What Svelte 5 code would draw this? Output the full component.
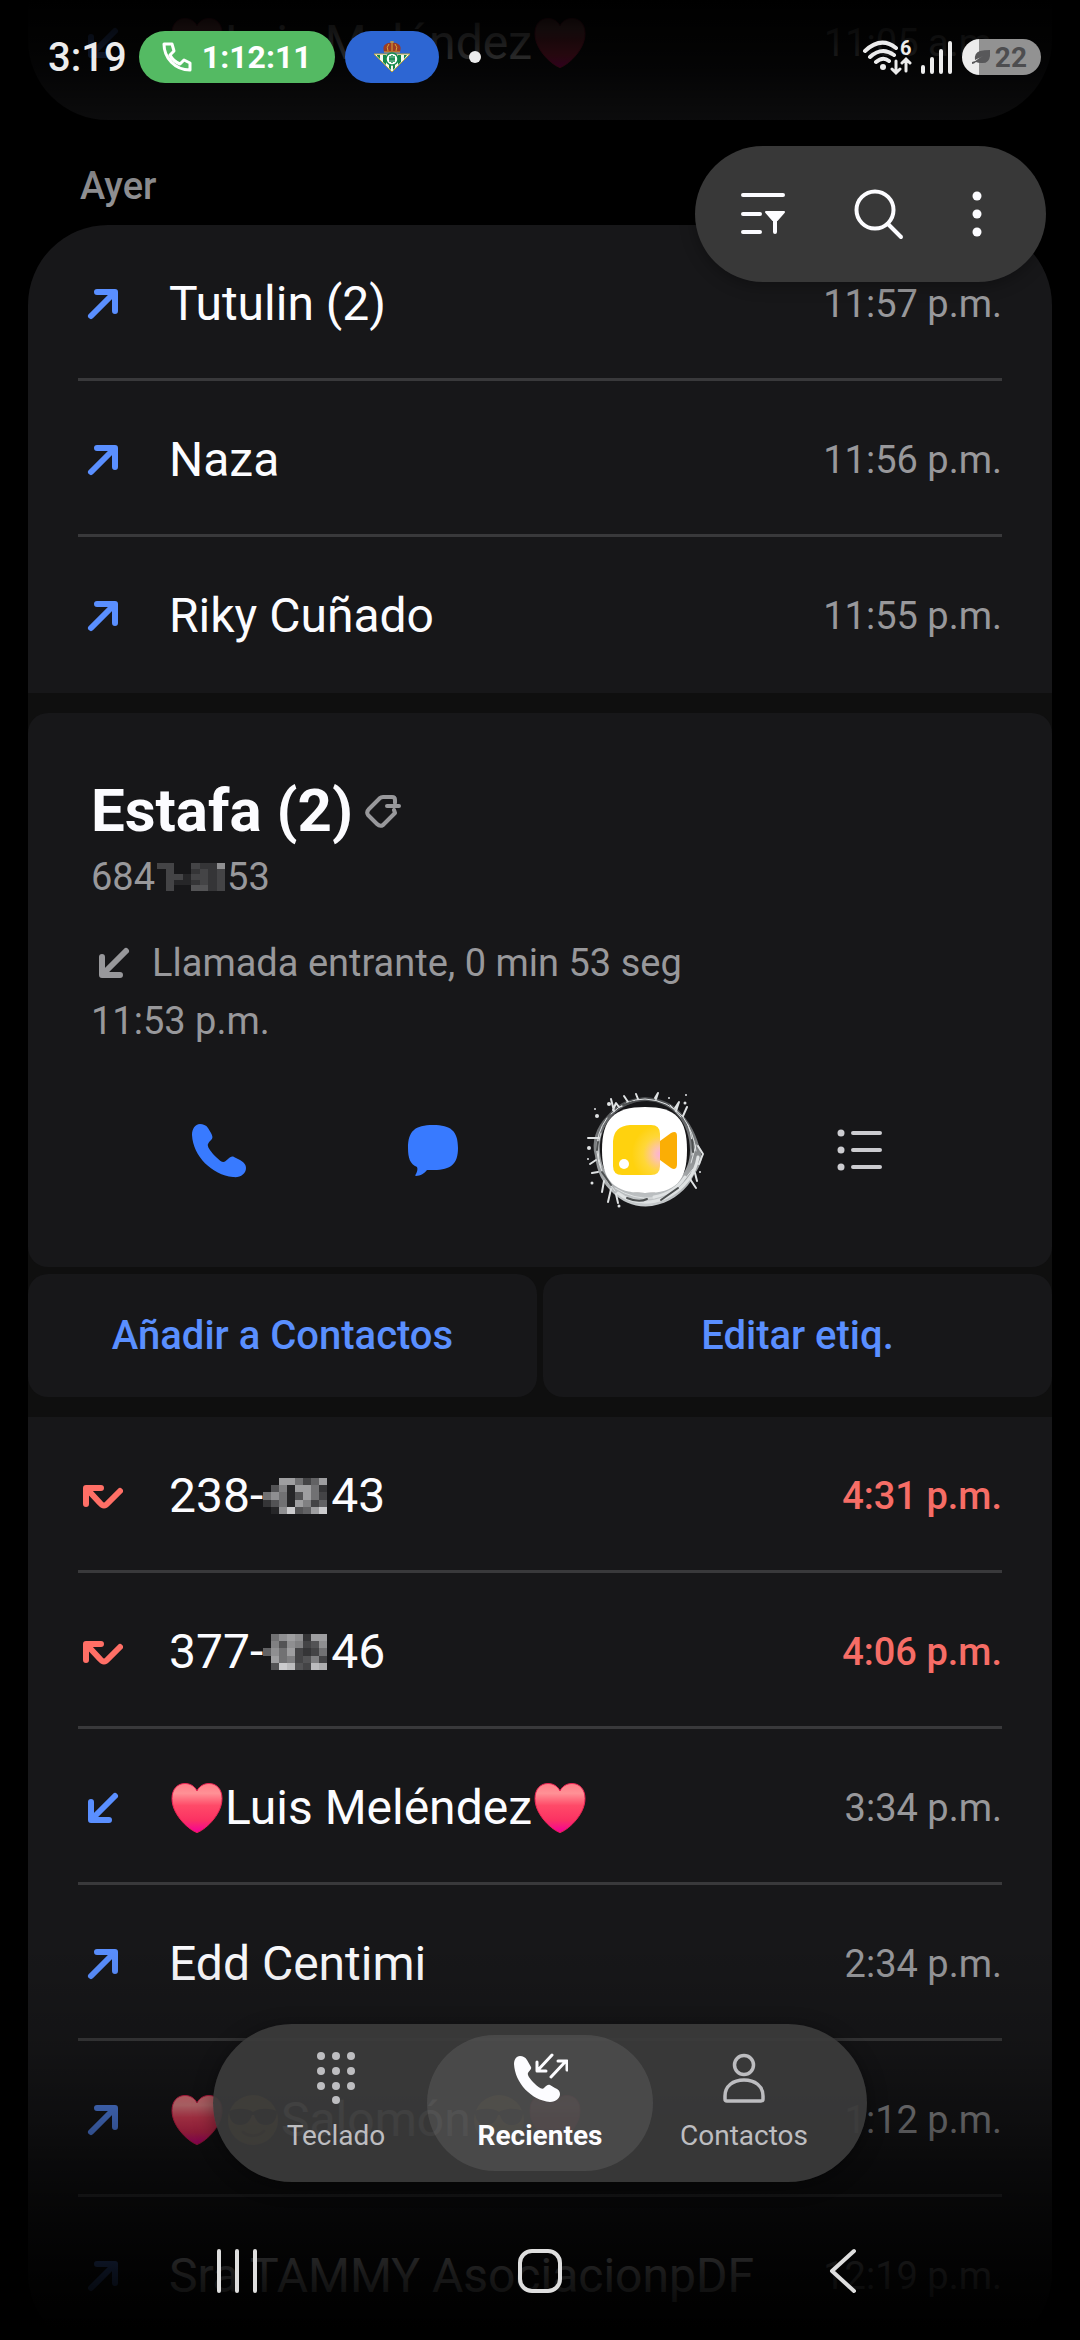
<script lang="ts">
  type CallKind = "out" | "in" | "missed";

  interface Call {
    id: number;
    kind: CallKind;
    // plain text, or one of the inline pictures: heart, cool, maskA, maskB
    name: string[];
    time: string;
  }

  const today: Call[] = [
    { id: 1, kind: "in", name: ["heart", "Luis Meléndez", "heart"], time: "11:05 a.m." },
  ];

  const before: Call[] = [
    { id: 2, kind: "out", name: ["Tutulin (2)"], time: "11:57 p.m." },
    { id: 3, kind: "out", name: ["Naza"], time: "11:56 p.m." },
    { id: 4, kind: "out", name: ["Riky Cuñado"], time: "11:55 p.m." },
  ];

  const after: Call[] = [
    { id: 5, kind: "missed", name: ["238-", "maskA", "43"], time: "4:31 p.m." },
    { id: 6, kind: "missed", name: ["377-", "maskB", "46"], time: "4:06 p.m." },
    { id: 7, kind: "in", name: ["heart", "Luis Meléndez", "heart"], time: "3:34 p.m." },
    { id: 8, kind: "out", name: ["Edd Centimi"], time: "2:34 p.m." },
    { id: 9, kind: "out", name: ["heart", "cool", "Salomón", "cool", "heart"], time: "1:12 p.m." },
    { id: 10, kind: "out", name: ["Sra TAMMY AsociacionpDF"], time: "12:19 p.m." },
  ];

  // one hex digit per tile, 0 is see-through
  const masks: Record<string, string[]> = {
    maskA: ["00996359", "04719962", "68614963", "24619735", "018c459c"],
    maskB: ["06898299", "07487348", "58693236", "09673473", "04cb43ba"],
    maskC: ["33003228", "03002323", "03313323", "03112323", "03004423"],
  };

  const tabs = [
    { id: "keypad", label: "Teclado" },
    { id: "recents", label: "Recientes" },
    { id: "contacts", label: "Contactos" },
  ];

  let tab = $state("recents");

  function tile(c: string): string {
    const v = 23 + parseInt(c, 16) * 15;
    return `rgb(${v},${v},${v + 2})`;
  }
</script>

{#snippet heart()}
  <svg class="emoji" viewBox="0 0 52 52" role="img" aria-label="corazón">
    <defs>
      <linearGradient id="heart-fill" x1="0" y1="0" x2="0" y2="1">
        <stop offset="0" stop-color="#ff7f88" />
        <stop offset="0.2" stop-color="#ff9196" />
        <stop offset="0.45" stop-color="#ff4a68" />
        <stop offset="0.75" stop-color="#fb3263" />
        <stop offset="1" stop-color="#f5009a" />
      </linearGradient>
    </defs>
    <path
      fill="url(#heart-fill)"
      stroke="#ef2455"
      stroke-width="1"
      d="M26 50.500C20 49 1 34 1 16.500C1 7 6.500 1.500 14 1.500C19.500 1.500 24 4.500 26 9C28 4.500 32.500 1.500 38 1.500C45.500 1.500 51 7 51 16.500C51 34 32 49 26 50.500Z"
    />
  </svg>
{/snippet}

{#snippet cool()}
  <svg class="emoji" viewBox="0 0 52 52" role="img" aria-label="gafas de sol">
    <circle cx="26" cy="26" r="25" fill="#c09a35" />
    <path fill="#15120c" d="M2 17C10 14 20 14 26 18C32 14 42 14 50 17C50 27 45 31 39 31C32 31 29 27 27 21H25C23 27 20 31 13 31C7 31 2 27 2 17Z" />
    <path d="M16 38C22 43 31 43 37 37" fill="none" stroke="#70450c" stroke-width="3" stroke-linecap="round" />
  </svg>
{/snippet}

{#snippet mask(id: string)}
  <svg class="mask" class:small={id === "maskC"} viewBox="0 0 64 40" preserveAspectRatio="none" aria-hidden="true" shape-rendering="crispEdges">
    {#each masks[id] as line, y}
      {#each line.split("") as c, x}
        {#if c !== "0"}
          <rect x={x * 8} y={y * 8} width="8" height="8" fill={tile(c)} />
        {/if}
      {/each}
    {/each}
  </svg>
{/snippet}

{#snippet arrow(kind: CallKind)}
  <svg class="arrow {kind}" viewBox="0 0 40 40" aria-hidden="true">
    {#if kind === "out"}
      <path d="M8 32L31 9M14 8H32V27" />
    {:else if kind === "in"}
      <path d="M32 8L9 31M8 14V32H26" />
    {:else}
      <path d="M3 28V12H18M4 13L17 27Q21 32 25 27L37 15" />
    {/if}
  </svg>
{/snippet}

{#snippet callList(calls: Call[])}
  <ul class="calls">
    {#each calls as call (call.id)}
      <li>
        <button type="button" class="call">
          {@render arrow(call.kind)}
          <span class="name">
            {#each call.name as part}
              {#if part === "heart"}
                {@render heart()}
              {:else if part === "cool"}
                {@render cool()}
              {:else if masks[part]}
                {@render mask(part)}
              {:else}
                <span>{part}</span>
              {/if}
            {/each}
          </span>
          <span class="time" class:missed={call.kind === "missed"}>{call.time}</span>
        </button>
      </li>
    {/each}
  </ul>
{/snippet}

<div class="phone">
  <main class="scroller">
    <section class="card today">
      {@render callList(today)}
    </section>

    <h2>Ayer</h2>

    <section class="card yesterday">
      {@render callList(before)}

      <div class="expanded">
        <article class="detail">
          <h3>
            Estafa (2)
            <svg class="tag" viewBox="0 0 36 36" aria-hidden="true">
              <path d="M29 17L30 20L18 32Q15 34 12 31L3 22Q1 19 4 16L15 5Q16 4 18 4H27Q30 4 30 7V10M22 13H34" />
            </svg>
          </h3>
          <p class="number"><span>684</span>{@render mask("maskC")}<span>53</span></p>
          <p class="info">{@render arrow("in")}<span>Llamada entrante, 0 min 53 seg</span></p>
          <p class="info">11:53 p.m.</p>

          <div class="quick">
            <button type="button" aria-label="Llamar">
              <svg width="56" height="56" viewBox="0 0 56 56">
                <path
                  fill="#387aff"
                  d="M9 2C4 2 1 7 1 13C2 34 21 53 42 55C49 56 55 52 55 46C55 42 52 40 49 38L43 35C41 34 39 35 37 37L34 39.500C32 41 29 39 25 35C21 31 17 26 17 24C16 22 19 19 21 17C22 15 21 13 20 11L17 6C15 3 12 2 9 2Z"
                />
              </svg>
            </button>
            <button type="button" aria-label="Mensaje">
              <svg width="54" height="56" viewBox="0 0 54 56">
                <path
                  fill="#387aff"
                  d="M27 3C45 3 52 9 52 26C52 42 45 48 28 48H21C19 51 14 54 10 54C9 54 9 53 10 52C11 50 12 47 11 45C4 42 2 36 2 26C2 9 9 3 27 3Z"
                />
              </svg>
            </button>
            <button type="button" aria-label="Videollamada">
              <svg width="120" height="120" viewBox="0 0 120 120">
                <defs>
                  <radialGradient id="cam" cx="1" cy="0.58" r="0.6">
                    <stop offset="0" stop-color="#fdb0d8" />
                    <stop offset="0.2" stop-color="#fdc2b0" />
                    <stop offset="0.6" stop-color="#ffd737" />
                    <stop offset="1" stop-color="#ffd20e" />
                  </radialGradient>
                  <linearGradient id="water" x1="0" y1="0" x2="0" y2="1">
                    <stop offset="0" stop-color="#4a4c4e" />
                    <stop offset="0.5" stop-color="#85888a" />
                    <stop offset="1" stop-color="#c9cdcf" />
                  </linearGradient>
                </defs>
                <path
                  fill="url(#water)"
                  d="M20 26C34 10 44 9 58 7C76 8 88 15 95 24C106 36 112 52 115 68C113 79 107 83 104 91C95 104 82 113 65 116C48 118 36 112 27 104C15 93 10 82 8 66C4 52 9 37 20 26ZM60 11C32 11 11 34 13 62C15 88 34 104 58 103C86 103 103 84 103 60C103 34 86 12 60 11Z"
                />
                <g fill="none" stroke="#dfe2e3" stroke-linecap="round" stroke-linejoin="round">
                  <path stroke-width="1" d="M24 24Q39 9 58 9Q81 10 96 27Q107 43 109 61M20 28Q9 43 10 62Q12 84 28 101M14 43Q8 60 14 77M101 35Q107 51 105 65M34 17L41 12M83 15L94 27" />
                  <path stroke-width="3" d="M31 103Q43 113 63 112Q86 109 101 90Q109 80 111 67M67 107Q88 103 98 87" />
                  <path stroke-width="1" d="M28 98Q47 110 67 108Q91 101 106 79M39 109Q58 117 78 109M109 55L104 73M112 68L104 85" />
                  <path stroke-width="2" d="M27 21L24 9M32 17L29 13L26 20M41 12L37 6M51 9L49 4M69 9L71 3L68 8M88 18L92 12L89 21M96 26L100 17M12 48L1 48M9 70L3 74M11 82L5 83M17 91L15 102M24 99L21 112M29 104L31 113M111 56L116 64L112 74M108 83L110 91M103 89L109 98" />
                </g>
                <path fill="none" stroke="#4c4f50" stroke-width="2" stroke-linecap="round" d="M40 108Q52 113 60 109M74 110L91 98M15 82L24 95M105 50L106 62M11 52L10 60M36 15L46 12" />
                <g fill="#dfe2e3">
                  <circle cx="22" cy="14" r="2" />
                  <circle cx="8" cy="19" r="1" />
                  <circle cx="10" cy="26" r="2" />
                  <circle cx="2" cy="58" r="2" />
                  <circle cx="1" cy="69" r="1" />
                  <circle cx="5" cy="93" r="1.500" />
                  <circle cx="32" cy="116" r="1.500" />
                  <circle cx="82" cy="8" r="1" />
                  <circle cx="99" cy="5" r="1" />
                  <circle cx="98" cy="13" r="1.500" />
                  <circle cx="113" cy="82" r="1" />
                </g>
                <path fill="#fff" d="M58 17C89 17 100 29 100 60C100 91 89 103 58 103C27 103 15 91 15 60C15 29 27 17 58 17Z" />
                <path fill="url(#cam)" d="M43 35H64Q73 35 73 44V76Q73 85 64 85H35Q26 85 26 76V51Q27 36 43 35Z" />
                <path fill="#fbae05" d="M73 51L84 43Q90 40 90 46V74Q90 81 84 78L73 70Z" />
                <circle cx="37" cy="74" r="5" fill="#fff" />
              </svg>
            </button>
            <button type="button" aria-label="Detalles">
              <svg width="48" height="48" viewBox="0 0 48 48">
                <g fill="#ccccd0">
                  <circle cx="4" cy="7" r="3.500" />
                  <circle cx="4" cy="24" r="3.500" />
                  <circle cx="4" cy="41" r="3.500" />
                </g>
                <path stroke="#ccccd0" stroke-width="4" stroke-linecap="round" d="M16 7H43M16 24H43M16 41H43" />
              </svg>
            </button>
          </div>
        </article>

        <div class="pair">
          <button type="button">Añadir a Contactos</button>
          <button type="button">Editar etiq.</button>
        </div>
      </div>

      {@render callList(after)}
    </section>
  </main>

  <div class="fade top"></div>
  <div class="fade bottom"></div>

  <header class="status">
    <span class="clock">3:19</span>
    <span class="chip ongoing">
      <svg width="30" height="30" viewBox="0 0 30 30" aria-hidden="true">
        <path
          fill="none"
          stroke="#fff"
          stroke-width="3"
          stroke-linejoin="round"
          d="M2 2H10L12 9L8 13C10 17 13 20 18 22L22 18L28 21V28C13 28 2 16 2 2Z"
        />
      </svg>
      1:12:11
    </span>
    <span class="chip team">
      <svg width="38" height="34" viewBox="0 0 38 34" aria-hidden="true">
        <path fill="#9d3c25" d="M11 12Q9 6 13 4Q16 2 19 3Q22 2 25 4Q29 6 27 12Z" />
        <path fill="none" stroke="#d9a536" stroke-width="1" d="M11 12H27M15 11Q13 7 16 4M23 11Q25 7 22 4M19 11V1M17 2H21" />
        <path fill="#f5f7ef" stroke="#b7a03e" d="M1 14H37L19 32Z" />
        <path fill="#148748" d="M4 15H7V19L4 16ZM10 15H13V25L10 22ZM25 15H28V22L25 25ZM31 15H34L31 19ZM16 25H18V30L16 28ZM20 25H22V28L20 30Z" />
        <circle cx="19" cy="19" r="6" fill="#fff" stroke="#168a4b" stroke-width="1.500" />
        <path stroke="#168a4b" stroke-width="1.500" fill="none" d="M17 16V22M19 15V23M21 16V22M16 19H22" />
      </svg>
    </span>
    <span class="dot"></span>
    <span class="spacer"></span>
    <svg class="wifi" width="50" height="38" viewBox="0 0 50 38" aria-hidden="true">
      <g fill="none" stroke="#ececec" stroke-width="4" stroke-linecap="round">
        <path d="M3 13Q19 -2 34 10M8 19Q20 8 32 17M14 24Q21 18 27 23" />
        <path stroke-width="3" d="M34 23V34M30 31L34 35L38 31M44 33V22M40 25L44 21L48 25" />
      </g>
      <circle cx="21" cy="29" r="3" fill="#ececec" />
      <text x="38" y="17" class="wifi-gen">6</text>
    </svg>
    <svg width="34" height="38" viewBox="0 0 34 38" aria-hidden="true">
      <path stroke="#ececec" stroke-width="4" stroke-linecap="round" d="M4 29V34M13 21V34M22 13V34M31 5V34" />
    </svg>
    <span class="battery">
      <svg width="20" height="16" viewBox="0 0 20 16" aria-hidden="true">
        <path fill="#58585a" d="M19 1V7Q18 15 10 14Q7 14 5 13Q3 15 1 15L1 13Q4 13 7 10L12 7L6 10L4 11Q3 4 9 2Q13 1 19 1Z" />
      </svg>
      22
    </span>
  </header>

  <div class="actions">
    <button type="button" aria-label="Filtrar">
      <svg width="48" height="48" viewBox="0 0 48 48">
        <path stroke="#fcfcff" stroke-width="4" stroke-linecap="round" d="M4 5H44M4 24H21M4 42H21M36 28V42" />
        <path fill="#fcfcff" stroke="#fcfcff" stroke-width="2" stroke-linejoin="round" d="M27 22H45L38 30H34Z" />
      </svg>
    </button>
    <button type="button" aria-label="Buscar">
      <svg width="54" height="54" viewBox="0 0 54 54">
        <circle cx="23" cy="23" r="18.500" fill="none" stroke="#fcfcff" stroke-width="4" />
        <path stroke="#fcfcff" stroke-width="4" stroke-linecap="round" d="M36 37L49 50" />
      </svg>
    </button>
    <button type="button" aria-label="Más opciones">
      <svg width="12" height="48" viewBox="0 0 12 48">
        <circle cx="6" cy="6" r="4.500" fill="#fcfcff" />
        <circle cx="6" cy="24" r="4.500" fill="#fcfcff" />
        <circle cx="6" cy="42" r="4.500" fill="#fcfcff" />
      </svg>
    </button>
  </div>

  <nav class="tabs" aria-label="Secciones">
    {#each tabs as t (t.id)}
      <button type="button" class:active={tab === t.id} onclick={() => (tab = t.id)}>
        <svg width="56" height="56" viewBox="0 0 56 56" aria-hidden="true">
          {#if t.id === "keypad"}
            {#each [6, 21, 36] as y}
              {#each [13, 28, 43] as x}
                <circle cx={x} cy={y} r="4" fill="currentColor" />
              {/each}
            {/each}
            <circle cx="28" cy="50" r="4" fill="currentColor" />
          {:else if t.id === "recents"}
            <path
              fill="currentColor"
              d="M8 6C4 6 2 10 2 14C3 33 19 50 38 52C44 52 48 48 48 44C48 41 46 39 43 38L38 35C36 34 34 36 32 38C30 40 26 37 22 33C18 29 15 25 16 23C17 21 20 19 19 17L15 10C13 7 11 6 8 6Z"
            />
            <path
              fill="none"
              stroke="currentColor"
              stroke-width="3"
              stroke-linecap="round"
              stroke-linejoin="round"
              d="M40 5L26 20M25 12V21H34M39 27L54 11M46 11H55V20"
            />
          {:else}
            <circle cx="28" cy="15" r="9.500" fill="none" stroke="currentColor" stroke-width="3.500" />
            <path
              fill="none"
              stroke="currentColor"
              stroke-width="3.500"
              stroke-linejoin="round"
              d="M9 46C9 36 17 30 28 30C39 30 47 36 47 46V49Q47 51 45 51H11Q9 51 9 49Z"
            />
          {/if}
        </svg>
        <span>{t.label}</span>
      </button>
    {/each}
  </nav>

  <footer class="system">
    <button type="button" aria-label="Aplicaciones recientes">
      <svg width="48" height="48" viewBox="0 0 48 48">
        <path stroke="#dedede" stroke-width="4" stroke-linecap="round" d="M6 4V44M24 4V44M42 4V44" />
      </svg>
    </button>
    <button type="button" aria-label="Inicio">
      <svg width="48" height="48" viewBox="0 0 48 48">
        <rect x="4" y="4" width="40" height="40" rx="12" fill="none" stroke="#dedede" stroke-width="4" />
      </svg>
    </button>
    <button type="button" aria-label="Atrás">
      <svg width="48" height="48" viewBox="0 0 48 48">
        <path fill="none" stroke="#dedede" stroke-width="4" stroke-linecap="round" stroke-linejoin="round" d="M35 4L13 24L35 44" />
      </svg>
    </button>
  </footer>
</div>

<style>
  :global(body) {
    background: #000;
  }

  .phone {
    position: relative;
    height: 100vh;
    overflow: hidden;
    background: #000;
    color: #fcfcff;
    font-family: Roboto, "Noto Sans", sans-serif;
  }

  button {
    border: none;
    padding: 0;
    background: transparent;
    color: inherit;
    font: inherit;
    cursor: pointer;
  }

  svg {
    display: block;
    flex-shrink: 0;
  }

  h2,
  h3,
  p {
    margin: 0;
  }

  .scroller {
    padding: 0 28px;
  }

  .card {
    background: #171719;
    overflow: hidden;
  }

  /* the list rests scrolled a little past its first row */
  .today {
    margin-top: -36px;
    border-radius: 0 0 80px 80px;
  }

  .yesterday {
    border-radius: 80px;
  }

  h2 {
    padding: 40px 52px 13px;
    font-size: 38px;
    line-height: 52px;
    font-weight: 500;
    color: #98989b;
  }

  .calls {
    list-style: none;
    margin: 0 50px;
    padding: 0;
  }

  .calls li {
    border-bottom: 3px solid #39393b;
  }

  .calls li:last-child {
    border-color: transparent;
  }

  .call {
    display: flex;
    align-items: center;
    width: 100%;
    height: 153px;
    padding: 4px 0 0 5px;
    text-align: left;
  }

  .arrow {
    width: 40px;
    height: 40px;
    fill: none;
    stroke: #5a8fff;
    stroke-width: 6;
    stroke-linecap: round;
    stroke-linejoin: round;
  }

  .arrow.missed {
    stroke: #ff6f66;
  }

  .name {
    display: flex;
    align-items: center;
    flex: 1;
    margin-left: 46px;
    font-size: 48px;
    white-space: nowrap;
  }

  .emoji {
    width: 52px;
    height: 52px;
    margin: 0 2px;
  }

  .mask {
    width: 64px;
    height: 36px;
    margin-right: 4px;
  }

  .mask.small {
    width: 68px;
    height: 28px;
    margin: 0 2px;
  }

  .time {
    font-size: 38px;
    color: #98989b;
  }

  .time.missed {
    font-weight: 500;
    color: #f66d66;
  }

  .expanded {
    display: flex;
    flex-direction: column;
    gap: 7px;
    padding: 20px 0;
    background: #0f0f0f;
  }

  .detail {
    padding: 62px 63px 57px;
    border-radius: 20px;
    background: #171719;
    color: #98989b;
    font-size: 38px;
  }

  h3 {
    display: flex;
    align-items: center;
    gap: 12px;
    color: #fcfcff;
    font-size: 60px;
    line-height: 72px;
    font-weight: 700;
  }

  .tag {
    width: 36px;
    height: 36px;
    fill: none;
    stroke: #98989b;
    stroke-width: 4;
    stroke-linecap: round;
    stroke-linejoin: round;
  }

  .number {
    display: flex;
    align-items: center;
    margin: 4px 0 31px;
    line-height: 52px;
  }

  .info {
    display: flex;
    align-items: center;
    line-height: 58px;
  }

  .info .arrow {
    margin: 0 18px 0 3px;
    stroke: #98989b;
  }

  .quick {
    display: grid;
    grid-template-columns: repeat(4, 1fr);
    height: 120px;
    margin: 40px 21px 0;
  }

  .quick button {
    display: grid;
    place-items: center;
  }

  .pair {
    display: grid;
    grid-template-columns: 1fr 1fr;
    gap: 6px;
  }

  .pair button {
    height: 123px;
    border-radius: 20px;
    background: #171719;
    color: #5a8fff;
    font-size: 40px;
    font-weight: 500;
  }

  .fade {
    position: absolute;
    left: 0;
    right: 0;
    pointer-events: none;
  }

  .fade.top {
    top: 0;
    height: 220px;
    background: linear-gradient(
      rgba(0, 0, 0, 1) 0,
      rgba(0, 0, 0, 0.9) 40px,
      rgba(0, 0, 0, 0.8) 70px,
      rgba(0, 0, 0, 0.5) 120px,
      rgba(0, 0, 0, 0.1) 180px,
      rgba(0, 0, 0, 0) 220px
    );
  }

  .fade.bottom {
    bottom: 0;
    height: 400px;
    background: linear-gradient(
      rgba(0, 0, 0, 0) 0,
      rgba(0, 0, 0, 0.15) 100px,
      rgba(0, 0, 0, 0.4) 180px,
      rgba(0, 0, 0, 0.7) 260px,
      rgba(0, 0, 0, 0.9) 335px,
      rgba(0, 0, 0, 1) 390px
    );
  }

  .status {
    position: absolute;
    top: 0;
    left: 0;
    right: 0;
    display: flex;
    align-items: center;
    height: 114px;
    padding: 0 39px 0 48px;
  }

  .clock {
    color: #ececec;
    font-size: 40px;
    font-weight: 500;
  }

  .chip {
    display: flex;
    align-items: center;
    justify-content: center;
    height: 52px;
    border-radius: 26px;
  }

  .ongoing {
    width: 196px;
    margin-left: 12px;
    gap: 10px;
    background: #54ba63;
    color: #fff;
    font-size: 32px;
    font-weight: 700;
  }

  .team {
    width: 94px;
    margin-left: 10px;
    background: #2d66d3;
  }

  .dot {
    width: 12px;
    height: 12px;
    margin-left: 30px;
    border-radius: 50%;
    background: #ececec;
  }

  .spacer {
    flex: 1;
  }

  .wifi {
    margin-right: 7px;
  }

  .wifi-gen {
    fill: #ececec;
    font-size: 20px;
    font-weight: 700;
  }

  .battery {
    display: flex;
    align-items: center;
    gap: 4px;
    height: 36px;
    margin-left: 9px;
    padding: 0 14px 0 9px;
    border-radius: 18px;
    background: linear-gradient(90deg, #ececec 17px, #929292 17px);
    color: #4d4d4f;
    font-size: 28px;
    font-weight: 700;
  }

  .actions {
    position: absolute;
    top: 146px;
    right: 34px;
    display: flex;
    align-items: center;
    gap: 65px;
    height: 136px;
    padding: 0 63px 0 44px;
    border-radius: 68px;
    background: #383838;
    box-shadow: 0 4px 16px rgba(0, 0, 0, 0.3);
  }

  .tabs {
    position: absolute;
    bottom: 158px;
    left: 50%;
    transform: translateX(-50%);
    display: flex;
    padding: 11px 21px;
    border-radius: 79px;
    background: rgba(58, 58, 58, 0.94);
    box-shadow: 0 4px 20px rgba(0, 0, 0, 0.4);
  }

  .tabs button {
    position: relative;
    display: flex;
    flex-direction: column;
    align-items: center;
    gap: 10px;
    width: 204px;
    height: 136px;
    padding-top: 15px;
    color: #bdbdc0;
    font-size: 28px;
    line-height: 40px;
  }

  .tabs button.active {
    color: #fcfcff;
    font-weight: 700;
  }

  .tabs button.active::before {
    content: "";
    position: absolute;
    inset: 0 -11px;
    border-radius: 68px;
    background: rgba(255, 255, 255, 0.09);
  }

  .system {
    position: absolute;
    bottom: 0;
    left: 0;
    right: 0;
    display: flex;
    justify-content: center;
    gap: 255px;
    height: 138px;
  }
</style>
